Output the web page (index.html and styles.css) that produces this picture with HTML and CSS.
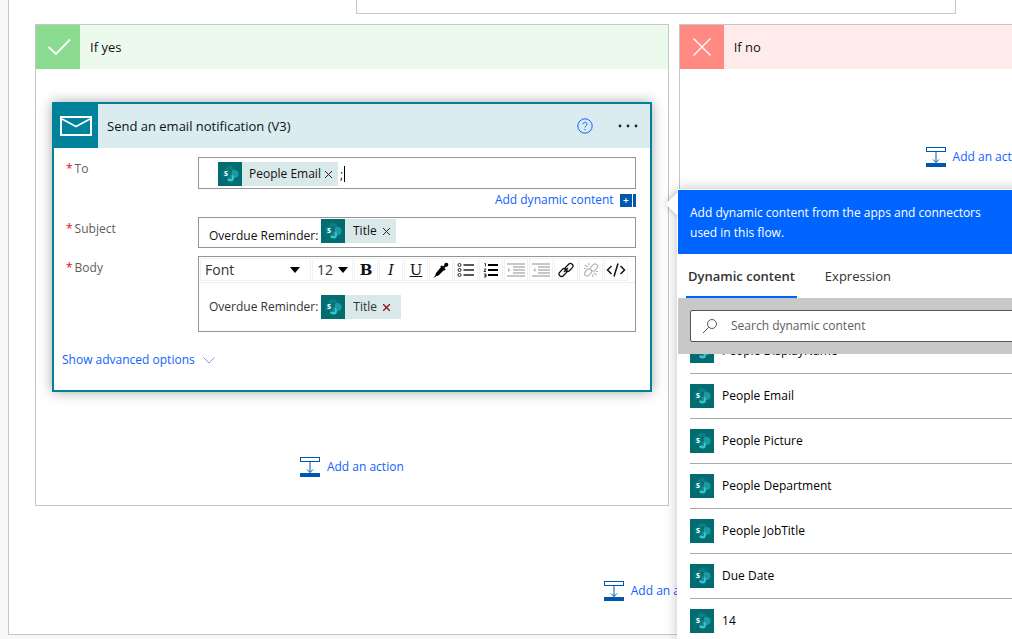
FILE: index.html
```html
<!DOCTYPE html>
<html lang="en">
<head>
<meta charset="utf-8">
<title>Edit flow</title>
<link rel="stylesheet" href="styles.css">
</head>
<body>
<svg class="defs" aria-hidden="true">
  <symbol id="sp" viewBox="0 0 24 24">
    <rect width="24" height="24" fill="#036c70"/>
    <circle cx="12" cy="9" r="5" fill="#0b7f83"/>
    <circle cx="16.500" cy="12" r="4" fill="#1a9ba1"/>
    <circle cx="12.500" cy="16" r="3.500" fill="#37c6d0"/>
    <rect x="7" y="8" width="7" height="9" fill="#024c50" opacity=".45"/>
    <rect x="4" y="8" width="8" height="8" rx="1" fill="#03787c"/>
    <text x="8" y="14.300" class="sp-letter" text-anchor="middle">s</text>
  </symbol>
  <symbol id="insert" viewBox="0 0 20 20">
    <rect x=".5" y=".5" width="19" height="4" fill="#fff" stroke="#0058ad"/>
    <path d="M10 5v10.500M7 12.500l3 3 3-3" fill="none" stroke="#0058ad"/>
    <rect y="16" width="20" height="4" fill="#0058ad"/>
  </symbol>
</svg>

<main class="canvas">
  <section class="scope">
    <div class="condition"></div>
    <div class="branches">
      <section class="branch">
        <header class="branch-head yes">
          <span class="mark"><svg width="44" height="44" viewBox="0 0 44 44"><path d="M12.500 22l7.500 7 14-14.500" fill="none" stroke="#fff" stroke-width="1.800"/></svg></span>
          <h2>If yes</h2>
        </header>

        <article class="card">
          <header class="card-head">
            <span class="card-icon"><svg width="32" height="20" viewBox="0 0 32 20"><rect x="1" y="1" width="30" height="18" fill="none" stroke="#fff" stroke-width="2"/><path d="M2 3l14 7.500L30 3" fill="none" stroke="#fff" stroke-width="1.600"/></svg></span>
            <h3>Send an email notification (V3)</h3>
            <button class="icon-btn" aria-label="Help"><svg width="16" height="16" viewBox="0 0 16 16" fill="none" stroke="#0f62fe"><circle cx="8" cy="8" r="7.200"/><path d="M6 6.300c0-2.700 4-2.700 4 0 0 1.500-2 1.500-2 3.200M8 11v1.200"/></svg></button>
            <button class="icon-btn more" aria-label="More commands"><svg width="20" height="4" viewBox="0 0 20 4" fill="#222"><circle cx="2" cy="2" r="1.400"/><circle cx="10" cy="2" r="1.400"/><circle cx="18" cy="2" r="1.400"/></svg></button>
          </header>
          <div class="card-body">
            <div class="row">
              <label for="to"><i>*</i>To</label>
              <div>
                <div class="field to">
                  <span class="token"><svg width="24" height="24"><use href="#sp"/></svg><span>People Email</span><button aria-label="Remove People Email"><svg width="7" height="7" viewBox="0 0 7 7"><path d="M0 0l7 7M7 0L0 7" stroke="#222"/></svg></button></span>
                  <input id="to" class="to-text" value=";"><span class="caret"></span>
                </div>
                <p class="dynamic"><a href="#panel">Add dynamic content <svg width="16" height="13" viewBox="0 0 16 13"><path d="M0 0h12v13H0zM13 0h3v13h-3z" fill="#0058ad"/><path d="M6 4v5M3.500 6.500h5" stroke="#fff"/></svg></a></p>
              </div>
            </div>
            <div class="row">
              <label for="subject"><i>*</i>Subject</label>
              <div class="field">
                <input id="subject" class="subject-text" value="Overdue Reminder:">
                <span class="token title"><svg width="24" height="24"><use href="#sp"/></svg><span>Title</span><button aria-label="Remove Title"><svg width="7" height="7" viewBox="0 0 7 7"><path d="M0 0l7 7M7 0L0 7" stroke="#222"/></svg></button></span>
              </div>
            </div>
            <div class="row">
              <span class="label" id="body-label"><i>*</i>Body</span>
              <div class="editor">
                <div class="toolbar">
                  <span class="pick font"><select aria-label="Font"><option>Font</option></select><svg width="10" height="6" viewBox="0 0 10 6"><path d="M0 0h10L5 6z"/></svg></span>
                  <span class="pick size"><select aria-label="Font size"><option>12</option></select><svg width="10" height="6" viewBox="0 0 10 6"><path d="M0 0h10L5 6z"/></svg></span>
                  <button class="tool bold">B</button>
                  <button class="tool italic">I</button>
                  <button class="tool underline">U</button>
                  <button class="tool" aria-label="Color"><svg width="16" height="16" viewBox="0 0 16 16"><path d="M8.500 4.500l3 3-6 6-3.500 1 1-3.500z"/><path d="M8 4l4 4M10.500 5.500l3-3" stroke="#000" stroke-width="2"/><circle cx="13.300" cy="2.700" r="2"/><path d="M1 15.500l2.500-2.500" stroke="#000"/></svg></button>
                  <button class="tool" aria-label="Bulleted list"><svg width="18" height="16" viewBox="0 0 18 16" fill="none" stroke="#222"><circle cx="2.500" cy="3" r="1.500"/><circle cx="2.500" cy="8" r="1.500"/><circle cx="2.500" cy="13" r="1.500"/><path d="M6.500 3H17M6.500 8H17M6.500 13H17" stroke-width="1.400"/></svg></button>
                  <button class="tool" aria-label="Numbered list"><svg width="16" height="16" viewBox="0 0 16 16" fill="none" stroke="#000"><path d="M1.500 1.500h1v3M1 7h2L1 9.500h2M1 12h2v3H1M1.500 13.500H3" stroke-width=".8"/><path d="M5 3h10M5 8h10M5 13h10" stroke-width="1.800"/></svg></button>
                  <button class="tool" aria-label="Indent" disabled><svg width="18" height="16" viewBox="0 0 18 16" fill="none" stroke="#b5b5b5" stroke-width="1.400"><path d="M0 2h18M6 5h12M6 8h12M6 11h12M0 14h18"/><path d="M1 6v4l2.500-2z" fill="#b5b5b5" stroke="none"/></svg></button>
                  <button class="tool" aria-label="Outdent" disabled><svg width="18" height="16" viewBox="0 0 18 16" fill="none" stroke="#b5b5b5" stroke-width="1.400"><path d="M0 2h18M6 5h12M6 8h12M6 11h12M0 14h18"/><path d="M3.500 6v4L1 8z" fill="#b5b5b5" stroke="none"/></svg></button>
                  <button class="tool" aria-label="Link"><svg width="16" height="16" viewBox="0 0 16 16" fill="none" stroke="#111" stroke-width="1.300"><rect x="6.500" y="3" width="9" height="5" rx="2.500" transform="rotate(-45 11 5.500)"/><rect x=".5" y="8" width="9" height="5" rx="2.500" transform="rotate(-45 5 10.500)"/><path d="M6 10l4-4"/></svg></button>
                  <button class="tool" aria-label="Remove link" disabled><svg width="16" height="16" viewBox="0 0 16 16" fill="none" stroke="#b5b5b5" stroke-width="1.200"><rect x="7" y="3" width="8" height="5" rx="2.500" transform="rotate(-45 11 5.500)"/><rect x="1" y="8" width="8" height="5" rx="2.500" transform="rotate(-45 5 10.500)"/><path d="M2 3l2.500 2M5.500 1l.5 2.500M1 6.500h2.500M13.500 13L11 11M10 15l-.5-2.500M15 9.500h-2.500"/></svg></button>
                  <button class="tool" aria-label="Code view"><svg width="20" height="16" viewBox="0 0 20 16" fill="none" stroke="#111" stroke-width="1.500"><path d="M5.500 4L1.500 8l4 4M14.500 4l4 4-4 4M12 1.500L8 14.500"/></svg></button>
                </div>
                <div class="rich" contenteditable="true" role="textbox" aria-labelledby="body-label"><span>Overdue Reminder:</span><span class="token title wide" contenteditable="false"><svg width="24" height="24"><use href="#sp"/></svg><span>Title</span><button aria-label="Remove Title from body"><svg width="7" height="7" viewBox="0 0 7 7"><path d="M0 0l7 7M7 0L0 7" stroke="#901020" stroke-width="1.300"/></svg></button></span></div>
              </div>
            </div>
            <p class="advanced"><a href="#advanced">Show advanced options <svg width="12" height="7" viewBox="0 0 12 7"><path d="M.5 .5L6 6l5.500-5.500" fill="none" stroke="#8d8fd8"/></svg></a></p>
          </div>
        </article>

        <a class="add" href="#add-yes"><svg width="20" height="20"><use href="#insert"/></svg>Add an action</a>
      </section>

      <section class="branch">
        <header class="branch-head no">
          <span class="mark"><svg width="44" height="44" viewBox="0 0 44 44"><path d="M13.500 13.500l17 17M30.500 13.500l-17 17" stroke="#fff" stroke-width="1.300"/></svg></span>
          <h2>If no</h2>
        </header>
        <a class="add" href="#add-no"><svg width="20" height="20"><use href="#insert"/></svg>Add an action</a>
      </section>
    </div>
    <a class="add last" href="#add-after"><svg width="20" height="20"><use href="#insert"/></svg>Add an action</a>
  </section>

  <aside class="panel" id="panel">
    <span class="beak"></span>
    <div class="panel-inner">
      <p class="panel-head">Add dynamic content from the apps and connectors used in this flow.</p>
      <div class="tabs" role="tablist">
        <button role="tab" aria-selected="true">Dynamic content</button>
        <button role="tab" aria-selected="false">Expression</button>
      </div>
      <div class="search">
        <label class="search-box"><svg width="16" height="16" viewBox="0 0 16 16" fill="none" stroke="#555"><circle cx="10" cy="6" r="4.500"/><path d="M6.800 9.200L1 15"/></svg><input type="search" placeholder="Search dynamic content" aria-label="Search dynamic content"></label>
      </div>
      <div class="results">
        <ul>
          <li><svg width="24" height="24"><use href="#sp"/></svg>People DisplayName</li>
          <li><svg width="24" height="24"><use href="#sp"/></svg>People Email</li>
          <li><svg width="24" height="24"><use href="#sp"/></svg>People Picture</li>
          <li><svg width="24" height="24"><use href="#sp"/></svg>People Department</li>
          <li><svg width="24" height="24"><use href="#sp"/></svg>People JobTitle</li>
          <li><svg width="24" height="24"><use href="#sp"/></svg>Due Date</li>
          <li><svg width="24" height="24"><use href="#sp"/></svg>14</li>
        </ul>
      </div>
    </div>
  </aside>
</main>
</body>
</html>
```

FILE: styles.css
```css
* { box-sizing: border-box; }
body {
  margin: 0;
  background: #f8f8f8;
  color: #111;
  font: 12px/20px "Open Sans", "Noto Sans", sans-serif;
}
h2, h3, p, ul { margin: 0; padding: 0; font-weight: 400; }
h2, h3 { font-size: 13px; }
a { color: #0f62fe; text-decoration: none; }
button, input, select { margin: 0; padding: 0; border: 0; background: none; color: inherit; font: inherit; }
svg { display: block; flex: none; }
.defs { position: absolute; width: 0; height: 0; }
.sp-letter { fill: #fff; font-size: 8px; font-weight: 700; }

.canvas { position: relative; height: 100vh; overflow: hidden; }
.scope {
  width: 128vw;
  margin-left: 8px;
  padding: 0 26px 33px;
  border: 1px solid #c6c6c6;
  border-top: 0;
  background: #fff;
}
.condition {
  width: 600px;
  height: 14px;
  margin: 0 auto 10px;
  border: 1px solid #c6c6c6;
  border-top: 0;
}
.branches { display: grid; grid-template-columns: 634fr 598fr; gap: 10px; }
.branch {
  padding-bottom: 28px;
  border: 1px solid #c6c6c6;
}
.branch-head { display: flex; align-items: center; gap: 10px; }
.branch-head.yes { background: #ebfaed; }
.branch-head.yes .mark { background: #8adb8f; }
.branch-head.no { background: #ffecea; }
.branch-head.no .mark { background: #ff8983; }
.add { display: flex; align-items: center; gap: 7px; width: max-content; margin: 78px auto 0; }
.card + .add { margin-top: 65px; }
.add.last { margin-top: 75px; }

.card {
  margin: 33px 16px 0;
  border: 2px solid #00839a;
  background: #fff;
  box-shadow: 0 0 12px rgba(0, 0, 0, .35);
}
.card-head { display: flex; align-items: center; height: 44px; padding-right: 12px; background: #daecef; }
.card-head h3 { flex: 1; margin-left: 9px; }
.card-icon { display: grid; place-items: center; width: 44px; height: 44px; background: #00839a; }
.icon-btn { display: grid; place-items: center; height: 24px; }
.more { margin-left: 25px; }
.card-body { padding: 9px 14px 20px 12px; }
.row { display: grid; grid-template-columns: 132px 1fr; margin-bottom: 8px; }
.row label, .label { padding-top: 2px; color: #605e5c; }
.row i { margin-right: 2px; color: #e00b1c; font-style: normal; }
.field { display: flex; align-items: flex-start; min-height: 31px; padding: 1px 10px; border: 1px solid #949494; }
.to { padding: 4px 19px 2px; }
.to-text { width: 4px; height: 24px; margin-left: 2px; }
.caret { align-self: center; width: 1px; height: 16px; background: #000; }
.subject-text { width: 112px; height: 20px; margin-top: 7px; }
.token { display: flex; align-items: center; height: 24px; padding-right: 6px; background: #d9e8e8; }
.token span { padding: 0 4px 0 7px; }
.title span { padding: 0 6px 0 8px; }
.wide { margin-left: 3px; padding-right: 11px; }
.dynamic { height: 20px; margin-top: 1px; }
.dynamic a { display: flex; align-items: center; justify-content: flex-end; gap: 6px; }
.row:first-child { margin-bottom: 7px; }

.editor { min-width: 0; height: 76px; border: 1px solid #949494; }
.toolbar { display: flex; gap: 1px; height: 26px; padding: 1px; border-bottom: 1px solid #eee; }
.pick { display: flex; align-items: center; border: 1px solid #f1f1f1; color: #333; font-size: 14px; }
.pick select { flex: 1; min-width: 0; height: 22px; appearance: none; }
.font { width: 111px; padding: 0 10px 0 4px; }
.size { width: 41px; padding: 0 4px; }
.tool { display: grid; place-items: center; width: 24px; border: 1px solid #f1f1f1; }
.bold, .italic, .underline { font-family: "DejaVu Serif", serif; font-size: 15px; }
.bold { font-weight: 700; }
.italic { font-style: italic; }
.underline { text-decoration: underline; }
.rich { display: flex; align-items: center; height: 48px; padding: 0 10px; color: #333; }
.advanced { margin-top: 18px; margin-left: -4px; }
.advanced a { display: flex; align-items: center; gap: 8px; }

.panel { position: absolute; top: 190px; bottom: 0; left: 67vw; width: 380px; }
.panel::before { content: ""; position: absolute; inset: -1px 0 0 -1px; background: #fff; box-shadow: 0 0 12px rgba(0, 0, 0, .25); }
.beak { position: absolute; top: 6px; left: -9px; width: 16px; height: 16px; background: #fff; box-shadow: 0 0 6px rgba(0, 0, 0, .25); transform: rotate(45deg); }
.panel-inner { position: relative; display: flex; flex-direction: column; height: 100%; background: #fff; overflow: hidden; }
.panel-head { padding: 13px 56px 11px 12px; background: #0065ff; color: #fff; }
.tabs { display: flex; gap: 26px; flex: none; height: 44px; padding-left: 8px; font-size: 13px; color: #333; }
.tabs button { padding: 2px 2px 0; border-bottom: 2px solid transparent; }
.tabs [aria-selected="true"] { border-color: #0065ff; font-weight: 600; }
.search { padding: 12px; background: #c8c9c7; }
.search-box { display: flex; align-items: center; gap: 13px; height: 32px; padding-left: 11px; border: 1px solid #555; border-radius: 2px; background: #fff; }
.search-box input { flex: 1; outline: 0; }
.search-box input::placeholder { color: #605e5c; opacity: 1; }
.results { flex: 1; min-height: 0; overflow: hidden; }
.results ul { margin-top: -25px; padding-left: 12px; list-style: none; }
.results li { display: flex; align-items: center; gap: 8px; height: 45px; border-bottom: 1px solid #a9a9a9; color: #000; font-weight: 500; line-height: 22px; }
```
